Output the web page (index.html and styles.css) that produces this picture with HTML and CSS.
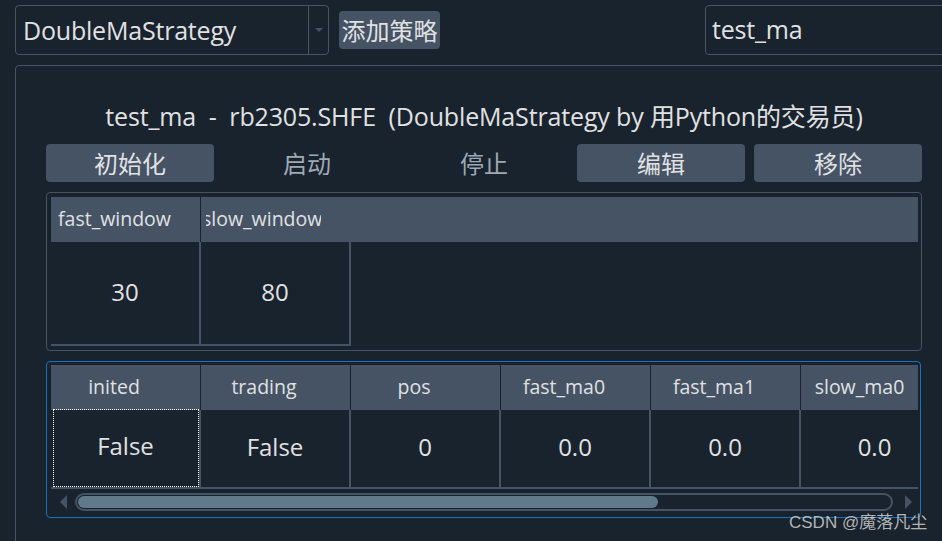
FILE: index.html
```html
<!DOCTYPE html>
<html>
<head>
<meta charset="utf-8">
<link rel="stylesheet" href="styles.css">
</head>
<body>
<div class="page">
  <div class="toolbar">
    <div class="combo">
      <span class="combo-text">DoubleMaStrategy</span>
      <span class="combo-drop"><span class="arrow-down"></span></span>
    </div>
    <button class="btn add">添加策略</button>
    <div class="spacer"></div>
    <div class="line-edit">test_ma</div>
  </div>

  <div class="group">
    <div class="title">test_ma&nbsp;&nbsp;-&nbsp;&nbsp;rb2305.SHFE&nbsp;&nbsp;(DoubleMaStrategy by 用Python的交易员)</div>
    <div class="actions">
      <button class="btn act">初始化</button>
      <button class="btn act disabled">启动</button>
      <button class="btn act disabled">停止</button>
      <button class="btn act">编辑</button>
      <button class="btn act">移除</button>
    </div>

    <div class="box params">
      <div class="grid">
        <div class="hrow">
          <div class="hcell left">fast_window</div>
          <div class="hcell left clip"><span class="clipped"><span class="shifted">slow_window</span></span></div>
          <div class="hfill"></div>
        </div>
        <div class="drow tall">
          <div class="dcell">30</div>
          <div class="dcell">80</div>
        </div>
      </div>
    </div>

    <div class="box vars">
      <div class="grid">
        <div class="hrow">
          <div class="hcell">inited</div>
          <div class="hcell">trading</div>
          <div class="hcell">pos</div>
          <div class="hcell">fast_ma0</div>
          <div class="hcell">fast_ma1</div>
          <div class="hcell last">slow_ma0</div>
        </div>
        <div class="drow short">
          <div class="dcell focus"><span class="focus-ring">False</span></div>
          <div class="dcell">False</div>
          <div class="dcell">0</div>
          <div class="dcell">0.0</div>
          <div class="dcell">0.0</div>
          <div class="dcell last">0.0</div>
        </div>
        <div class="scrollbar">
          <span class="arrow-left"></span>
          <div class="track"><div class="handle"></div></div>
          <span class="arrow-right"></span>
        </div>
      </div>
    </div>
  </div>
  <div class="watermark">CSDN @魔落凡尘</div>
</div>
</body>
</html>
```

FILE: styles.css
```css
* { box-sizing: border-box; }
html, body {
  margin: 0;
  padding: 0;
  width: 942px;
  height: 541px;
  overflow: hidden;
  background: #19232d;
}
body {
  font-family: "Open Sans", "Noto Sans CJK SC", sans-serif;
  color: #e0e1e3;
}
.page {
  position: relative;
  width: 942px;
  height: 541px;
  overflow: hidden;
  padding: 5px 0 0 15px;
}
.toolbar {
  display: flex;
  align-items: center;
  height: 50px;
  width: 1000px;
}
.combo {
  width: 314px;
  height: 50px;
  border: 1px solid #455364;
  border-radius: 4px;
  display: flex;
  align-items: center;
}
.combo-text {
  flex: 1;
  padding-left: 7px;
  font-size: 25px;
  letter-spacing: -0.2px;
  line-height: 46px;
}
.combo-drop {
  width: 20px;
  height: 100%;
  border-left: 1px solid #455364;
  display: flex;
  align-items: center;
  justify-content: center;
}
.arrow-down {
  width: 0; height: 0;
  border-left: 4px solid transparent;
  border-right: 4px solid transparent;
  border-top: 4px solid #455364;
}
.btn {
  font-family: "Noto Sans CJK SC", sans-serif;
  background: #455364;
  color: #e0e1e3;
  border: none;
  border-radius: 4px;
  padding: 0;
  margin: 0;
}
.add {
  margin-left: 10px;
  width: 101px;
  height: 38px;
  font-size: 24px;
  line-height: 38px;
}
.spacer { width: 265px; }
.line-edit {
  width: 300px;
  height: 50px;
  border: 1px solid #455364;
  border-radius: 4px;
  font-size: 25px;
  line-height: 46px;
  padding-left: 6px;
  letter-spacing: -0.2px;
}
.group {
  margin-top: 10px;
  width: 1000px;
  height: 520px;
  border: 1px solid #455364;
  border-radius: 4px;
  padding: 35px 0 0 30px;
}
.title {
  width: 876px;
  height: 30px;
  line-height: 30px;
  text-align: center;
  font-size: 25px;
  letter-spacing: -0.15px;
  white-space: nowrap;
}
.actions {
  margin-top: 13px;
  display: flex;
  gap: 9px;
  width: 876px;
}
.act {
  width: 168px;
  height: 38px;
  font-size: 24px;
  line-height: 38px;
}
.act.disabled {
  background: transparent;
  color: #9da9b5;
}
.box {
  width: 876px;
  border-radius: 4px;
  margin-top: 10px;
}
.params {
  height: 159px;
  border: 1px solid #455364;
  padding: 4px 3px 0 4px;
}
.vars {
  height: 157px;
  width: 875px;
  border: 1px solid #1a72bb;
  padding: 3px 2px 0 4px;
}
.grid {
  width: 867px;
  overflow: hidden;
}
.hrow {
  display: flex;
  height: 45px;
  background: #455364;
}
.hcell {
  flex: 0 0 150px;
  width: 150px;
  border-right: 1px solid #19232d;
  font-size: 19.5px;
  line-height: 44px;
  text-align: center;
  padding-right: 23px;
  white-space: nowrap;
  overflow: hidden;
}
.hcell.left {
  text-align: left;
  padding: 0 0 0 7px;
}
.hcell.clip {
  width: 149px;
  flex-basis: 149px;
  padding-left: 5px;
  border-right: none;
}
.clipped {
  display: inline-block;
  width: 115px;
  overflow: hidden;
  vertical-align: top;
}
.shifted {
  display: inline-block;
  margin-left: -4px;
}
.hcell.last { flex: 1 1 auto; border-right: none; padding-right: 0; padding-left: 0; }
.hfill { flex: 1; }
.drow { display: flex; }
.drow.tall { height: 104px; }
.drow.short { height: 79px; }
.dcell {
  flex: 0 0 150px;
  width: 150px;
  border-right: 2px solid #455364;
  border-bottom: 2px solid #455364;
  font-size: 24px;
  display: flex;
  align-items: center;
  justify-content: center;
  padding-bottom: 4px;
}
.dcell.last { flex: 1 1 auto; border-right: none; padding-left: 30px; }
.dcell.focus { padding: 0 0 2px 1px; }
.focus-ring {
  width: 146px;
  height: 78px;
  border: 1px dotted #ffffff;
  display: flex;
  align-items: center;
  justify-content: center;
  padding-bottom: 4px;
}
.scrollbar {
  display: flex;
  align-items: center;
  height: 22px;
  padding-top: 3px;
}
.arrow-left {
  margin-left: 9px;
  width: 0; height: 0;
  border-top: 7px solid transparent;
  border-bottom: 7px solid transparent;
  border-right: 7px solid #455364;
}
.track {
  margin-left: 8px;
  width: 818px;
  height: 18px;
  border: 2px solid #455364;
  border-radius: 9px;
  padding: 1px;
}
.handle {
  width: 580px;
  height: 12px;
  background: #60798b;
  border-radius: 6px;
}
.arrow-right {
  margin-left: 12px;
  width: 0; height: 0;
  border-top: 7px solid transparent;
  border-bottom: 7px solid transparent;
  border-left: 7px solid #455364;
}
.watermark {
  position: absolute;
  left: 789px;
  top: 508px;
  font-family: "Liberation Sans", "Noto Sans CJK SC", sans-serif;
  font-size: 17px;
  color: rgba(220, 220, 220, 0.8);
  white-space: nowrap;
}
```
